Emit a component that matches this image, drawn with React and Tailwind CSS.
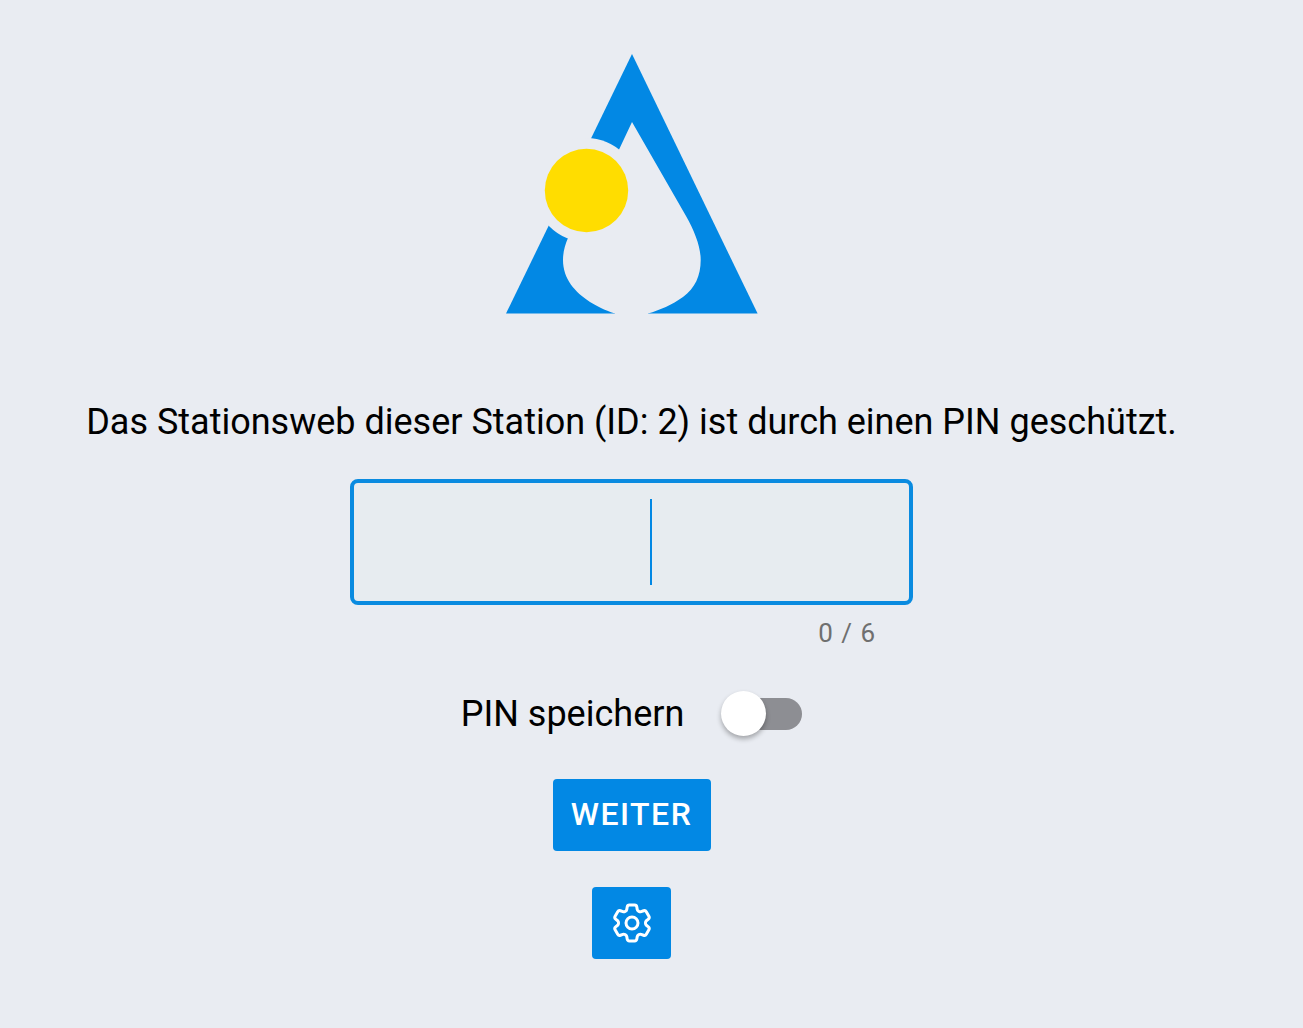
import { HiOutlineCog6Tooth } from "react-icons/hi2";

function Logo() {
  return (
    <svg viewBox="506 54 252 260" className="w-[252px] h-[260px] block">
      <path d="M632 54 L757.6 313.6 L506 313.6 Z" fill="#0288e4" />
      <path
        d="M632 122 L686 216 C695 232 700.7 247 700.7 260 C700.7 276 695 288 683 297 C672 305 660 310 648 313.6 L648 316 L615 316 L615 313.6 C604 310 597 306 590 302 C575 292 563 279 563 260 C563 252 565 245 568 238 L600 190 Z"
        fill="#e9ecf2"
      />
      <circle cx="586.5" cy="190" r="52" fill="#e9ecf2" />
      <circle cx="586.5" cy="190.5" r="41.7" fill="#ffdd00" />
    </svg>
  );
}

function PinField() {
  return (
    <div className="w-[563px]">
      <div className="h-[126px] rounded-lg border-[4px] border-[#0a8be0] bg-[#e7ecf0] flex items-center justify-center pl-[38px]">
        <span className="block w-0.5 h-[86px] bg-[#0288e4]"></span>
      </div>
      <div className="mt-[13px] pr-[37px] text-right text-[26px] leading-[30px] tracking-[1px] text-[#6f6f6f]">0 / 6</div>
    </div>
  );
}

function Toggle() {
  return (
    <div className="relative w-[81px] h-[45px] flex items-center justify-end">
      <div className="w-[78px] h-8 rounded-full bg-[#8d8e93]"></div>
      <div className="absolute left-0 top-0 w-[45px] h-[45px] rounded-full bg-white shadow-[0_3px_5px_rgba(0,0,0,0.3)]"></div>
    </div>
  );
}

export default function App() {
  return (
    <div className="min-h-[1028px] bg-[#e9ecf2] flex flex-col items-center pt-[54px] pr-10 font-['Roboto',sans-serif] text-black">
      <Logo />
      <p className="mt-[86px] text-[36px] leading-[44px] whitespace-nowrap">
        Das Stationsweb dieser Station (ID: 2) ist durch einen PIN geschützt.
      </p>
      <div className="mt-[35px]">
        <PinField />
      </div>
      <div className="mt-[43px] flex items-center gap-[37px]">
        <span className="text-[36px] leading-[44px]">PIN speichern</span>
        <Toggle />
      </div>
      <button className="mt-[43px] w-[158px] h-[72px] pb-0.5 rounded bg-[#0288e4] text-white text-[32px] font-medium tracking-[1.5px]">
        WEITER
      </button>
      <button className="mt-9 w-[79px] h-[72px] rounded bg-[#0288e4] text-white flex items-center justify-center">
        <HiOutlineCog6Tooth className="w-12 h-12" />
      </button>
    </div>
  );
}
